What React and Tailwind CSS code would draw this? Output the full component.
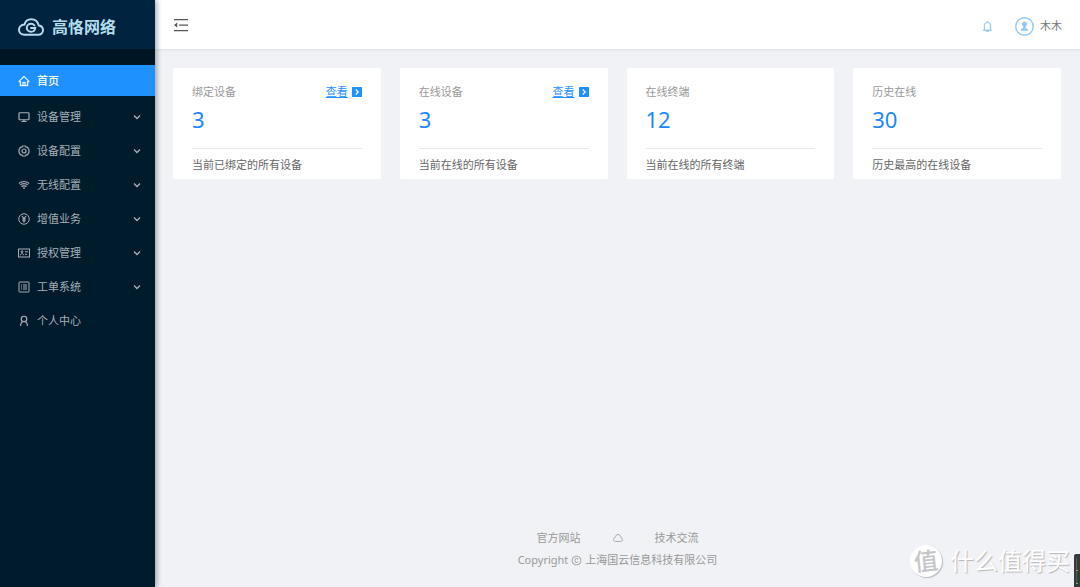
import React, { useState } from "react";
import { AiOutlineHome, AiOutlineWifi, AiOutlineBell, AiOutlineCopyright } from "react-icons/ai";

const MonitorIcon = () => (
  <svg viewBox="0 0 24 24" className="w-3 h-3" fill="none" stroke="currentColor" strokeWidth="2.4">
    <rect x="2" y="3.500" width="20" height="14" rx="1.500" />
    <path d="M12 18v3M7 21h10" />
  </svg>
);

const GearIcon = () => (
  <svg viewBox="0 0 24 24" className="w-3 h-3" fill="none" stroke="currentColor" strokeWidth="2.4" strokeLinejoin="round">
    <path d="M9 2h6l1.500 2.200 2.800.6L22 9.500v5l-2.700 4.700-2.800.6L15 22H9l-1.500-2.200-2.800-.6L2 14.500v-5l2.700-4.700 2.800-.6z" />
    <circle cx="12" cy="12" r="4" />
  </svg>
);

const WifiIcon = () => <AiOutlineWifi className="w-3 h-3 stroke-[30]" />;

const YenIcon = () => (
  <svg viewBox="0 0 24 24" className="w-3 h-3" fill="none" stroke="currentColor" strokeWidth="2">
    <circle cx="12" cy="12" r="10.500" />
    <path strokeWidth="2.400" d="M8 6l4 5.500L16 6M12 11v8M8.500 12h7M8.500 15.500h7" />
  </svg>
);

const CardIcon = () => (
  <svg viewBox="0 0 24 24" className="w-3 h-3" fill="none" stroke="currentColor" strokeWidth="2">
    <rect x="1" y="4" width="22" height="16" />
    <circle cx="8" cy="9.500" r="1.800" />
    <path d="M4.500 16.500c0-4 7-4 7 0M14 9.500h6M14 14.500h4" />
  </svg>
);

const OrderIcon = () => (
  <svg viewBox="0 0 24 24" className="w-3 h-3" fill="none" stroke="currentColor" strokeWidth="2">
    <rect x="2" y="2" width="20" height="20" rx="1" />
    <path d="M6 8h2M10 8h8M6 12h2M10 12h8M6 16h2M10 16h8" />
  </svg>
);

const PersonIcon = () => (
  <svg viewBox="0 0 24 24" className="w-3 h-3" fill="none" stroke="currentColor" strokeWidth="2.400">
    <circle cx="12" cy="8" r="5.500" />
    <path d="M9 13c-2.500 2-4 5-4 9M15 13c2.500 2 4 5 4 9" />
  </svg>
);

const ChevronIcon = () => (
  <svg viewBox="0 0 16 16" className="ml-auto w-2 h-2" fill="none" stroke="currentColor" strokeWidth="2.600">
    <path d="M2 5l6 6 6-6" />
  </svg>
);

const MENU = [
  { label: "设备管理", icon: MonitorIcon, sub: true },
  { label: "设备配置", icon: GearIcon, sub: true },
  { label: "无线配置", icon: WifiIcon, sub: true },
  { label: "增值业务", icon: YenIcon, sub: true },
  { label: "授权管理", icon: CardIcon, sub: true },
  { label: "工单系统", icon: OrderIcon, sub: true },
  { label: "个人中心", icon: PersonIcon, sub: false },
];

const CARDS = [
  { title: "绑定设备", value: 3, note: "当前已绑定的所有设备", link: true },
  { title: "在线设备", value: 3, note: "当前在线的所有设备", link: true },
  { title: "在线终端", value: 12, note: "当前在线的所有终端", link: false },
  { title: "历史在线", value: 30, note: "历史最高的在线设备", link: false },
];

function Logo() {
  return (
    <svg viewBox="0 0 52 36" className="w-[26px] h-[18px]" fill="none" stroke="currentColor" strokeWidth="4" strokeLinecap="round">
      <path d="M13 33.500h27c6 0 10-4 10-9.500 0-5-3.500-8.500-8.500-9.200C39.500 7 34 2.500 26.500 2.500c-7 0-12 4.500-13.500 10.500C6.500 13.500 2 18 2 23.500c0 6 4.500 10 11 10z" />
      <path d="M33 15c-1.500-2-4-3.500-7-3.500-4.500 0-8.500 3.500-8.500 8s4 8 8.500 8 8-3 8.500-7.500H26" />
    </svg>
  );
}

function Sidebar() {
  const [active, setActive] = useState("首页");
  return (
    <aside className="relative z-10 w-[155px] shrink-0 bg-[#001b2b] text-[#a6b0b8] shadow-[2px_0_5px_rgba(0,21,41,0.35)]">
      <div className="h-[49px] pl-[18px] pt-1 flex items-center gap-2 bg-[#002440] text-[#b3dcea]">
        <Logo />
        <h1 className="text-base font-bold">高恪网络</h1>
      </div>
      <div className="h-4 bg-[#001523]" />
      <nav>
        <button onClick={() => setActive("首页")}
          className="w-full h-[31px] pl-[18px] mb-1 flex items-center gap-[7px] bg-[#1e90ff] text-white font-medium">
          <AiOutlineHome className="w-3 h-3 stroke-[30]" />
          <span className="pt-px">首页</span>
        </button>
        {MENU.map(({ label, icon: Icon, sub }) => (
          <button key={label} onClick={() => setActive(label)} aria-current={active === label}
            className="w-full h-[34px] pl-[18px] pr-[14px] flex items-center gap-[7px] hover:text-white">
            <Icon />
            <span className="pt-px">{label}</span>
            {sub && <ChevronIcon />}
          </button>
        ))}
      </nav>
    </aside>
  );
}

function Header() {
  return (
    <header className="h-[49px] shrink-0 px-[18px] flex items-center bg-white shadow-[0_1px_3px_rgba(0,21,41,0.08)]">
      <button aria-label="menu" className="text-[#555555]">
        <svg viewBox="0 0 16 16" className="w-4 h-4" fill="currentColor">
          <path d="M1 2h14v1.300H1zM6 7.400h9v1.300H6zM1 13h14v1.300H1zM1 8l3.200-2.400v4.800z" />
        </svg>
      </button>
      <button aria-label="notifications" className="ml-auto mr-[21px] pt-1 text-[#8fc9fb]">
        <AiOutlineBell className="w-[13px] h-[13px] stroke-[20]" />
      </button>
      <button className="flex items-center gap-[6px] pt-1 text-[#777777]">
        <svg viewBox="0 0 38 38" className="w-[19px] h-[19px] text-[#8fc9fb]">
          <circle cx="19" cy="19" r="17.500" fill="none" stroke="currentColor" strokeWidth="2.800" />
          <path fill="currentColor" d="M19 9c-3 0-5 2-5 4.800 0 2.200 1.200 3.800 2.500 5.200v3.500c-3.500.3-5 1.500-5 5h15c0-3.500-1.500-4.700-5-5V19c1.300-1.400 2.500-3 2.500-5.200C24 11 22 9 19 9z" />
        </svg>
        <span>木木</span>
      </button>
    </header>
  );
}

function StatCard({ title, value, note, link }) {
  return (
    <section className="rounded-xs bg-white px-[19px] pt-4">
      <div className="h-4 flex items-center justify-between text-[#999999]">
        <h2>{title}</h2>
        {link && (
          <a href="#detail" className="flex items-center gap-1 text-[#1e90ff]">
            <span className="underline">查看</span>
            <svg viewBox="0 0 20 20" className="w-[10px] h-[10px]">
              <rect width="20" height="20" rx="1" fill="currentColor" />
              <path d="M7.500 5l5 5-5 5" fill="none" stroke="white" strokeWidth="2.400" />
            </svg>
          </a>
        )}
      </div>
      <p className="h-12 pt-1 text-[22px] leading-[30px] text-[#1e86ff]">{value}</p>
      <p className="h-[31px] border-t border-[#e8e8e8] leading-8 text-[#666666]">{note}</p>
    </section>
  );
}

function Footer() {
  return (
    <footer className="mt-auto pb-4 flex flex-col items-center text-[#999999]">
      <div className="flex items-center gap-8 leading-[22px]">
        <a href="#site">官方网站</a>
        <a href="#cloud" aria-label="cloud">
          <svg viewBox="0 0 20 16" className="w-[10px] h-2" fill="none" stroke="currentColor" strokeWidth="1.600">
            <path d="M5 15h10c2.500 0 4-1.800 4-4 0-2-1.300-3.500-3.200-3.800C15.300 3.500 13 1 10 1S4.700 3.500 4.200 7.200C2.300 7.500 1 9 1 11c0 2.200 1.500 4 4 4z" />
          </svg>
        </a>
        <a href="#forum">技术交流</a>
      </div>
      <p className="flex items-center gap-[3px] leading-[22px]">
        Copyright <AiOutlineCopyright className="w-[11px] h-[11px]" /> 上海国云信息科技有限公司
      </p>
    </footer>
  );
}

export default function App() {
  return (
    <div className="relative min-h-screen flex overflow-hidden bg-[#f0f2f5] text-[11px] font-['Noto_Sans','Noto_Sans_CJK_SC',sans-serif]">
      <Sidebar />
      <div className="flex-1 min-w-0 flex flex-col">
        <Header />
        <main className="grid grid-cols-4 gap-[19px] pt-[19px] pl-[18px] pr-[19px]">
          {CARDS.map((c) => <StatCard key={c.title} {...c} />)}
        </main>
        <Footer />
      </div>

      <div className="absolute right-[10px] bottom-[10px] flex items-center gap-2 text-white">
        <span className="w-8 h-8 rounded-full bg-white flex items-center justify-center text-2xl font-medium text-[#c4c6c9] shadow-[1px_1px_1px_#b8babd]">
          <span className="-rotate-6">值</span>
        </span>
        <span className="text-2xl leading-8 [text-shadow:1px_1px_1px_#b4b6b9]">什么值得买</span>
      </div>
      <div className="absolute right-0 bottom-0 w-[6px] h-[33px] pl-[2px] pt-1 rounded-tl-xs bg-[#35383d]">
        <div className="w-px h-3 bg-[#6b5a3a]" />
        <div className="w-[2px] h-px bg-[#e08a20]" />
        <div className="w-px h-3 bg-[#3f6b3f]" />
        <div className="w-[2px] h-px bg-[#6fc040]" />
      </div>
    </div>
  );
}
